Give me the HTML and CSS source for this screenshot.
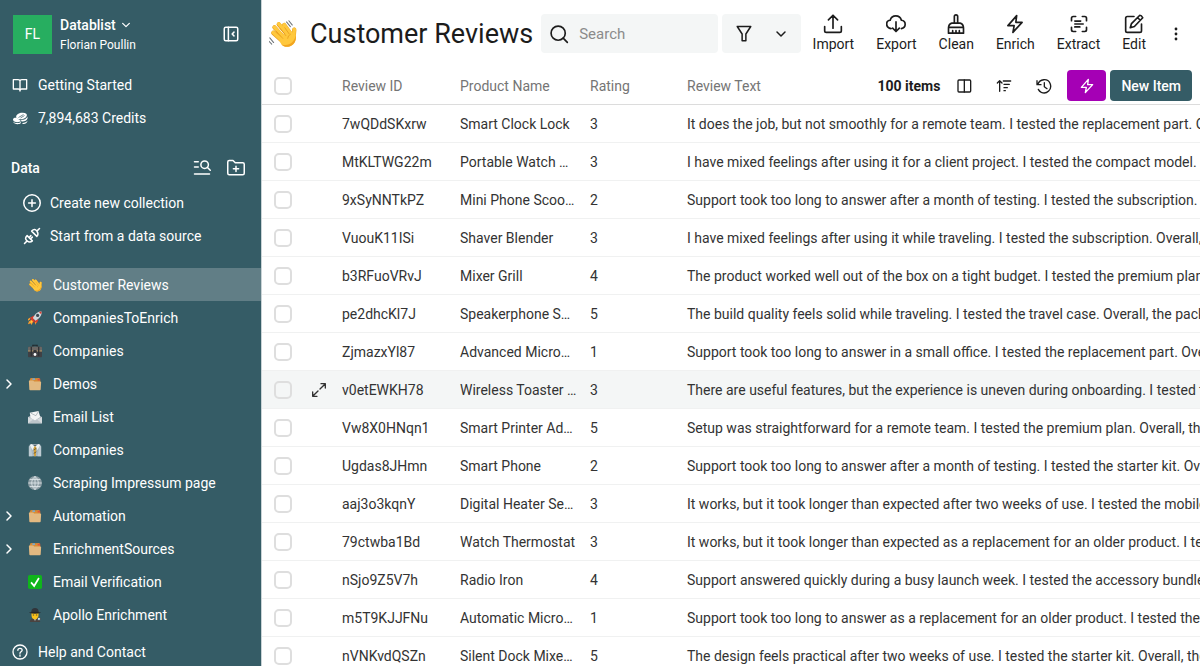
FILE: index.html
```html
<!DOCTYPE html>
<html lang="en">
  <head>
    <meta charset="UTF-8" />
    <meta name="viewport" content="width=device-width, initial-scale=1.0" />
    <title>Customer Reviews - Datablist</title>
    <link rel="stylesheet" href="styles.css">
  </head>
  <body>
    <!-- shared icons -->
    <svg class="sprite" aria-hidden="true">
      <symbol id="chevron-down" viewBox="0 0 24 24"><path d="M4 8l8 8 8-8" /></symbol>
      <symbol id="chevron-right" viewBox="0 0 24 24"><path d="M8 4l8 8-8 8" /></symbol>
      <symbol id="bolt" viewBox="0 0 24 24"><path d="M14 2L3.500 14H11l-1.500 8L20.500 10H13z" /></symbol>
      <symbol id="wave" viewBox="0 0 36 36">
        <g fill="none" stroke-linecap="round" stroke-linejoin="round">
          <path d="M5.500 16.500L17 27M7 9.500L20 24M12.500 5.500L25 20M19.500 6.500L28 18M32.500 12.500L31.500 24" stroke="#e59a1c" stroke-width="5.500" />
          <path d="M5.500 16L17 26.500M7 9L20 23.500M12.500 5L25 19.500M19.500 6L28 17.500M32.500 12L31.500 24" stroke="#ffc83d" stroke-width="4.500" />
        </g>
        <path d="M12 24l13-10 4 4 5.500 1c.500 7-1 11-5 13.500-5 3-10 2.500-13.500-1z" fill="#ffc83d" />
        <path d="M34.500 19c.500 7-1 11-5 13.500-5 3-10 2.500-13.500-1 6 1.500 10 .500 13.500-2.500 3-3 4-6 5-10z" fill="#f2a521" />
        <path d="M9 14l9 10M14 10.500l8 10M20 9.500l6 8.500M28 18q-4 2-4 6" fill="none" stroke="#e59a1c" />
        <path d="M22.500 2.500l5 6M25.500 1l4.500 5.500M1 23l5 6M0 27.500l3.500 3.500" fill="none" stroke="#6d7378" stroke-width="1.300" stroke-linecap="round" />
      </symbol>
      <symbol id="folder" viewBox="0 0 16 16">
        <path d="M2 3.500L3 1l4 .500 6-.500 1 3v3H2z" fill="#d98c34" />
        <path d="M5 1.500h3v2H5z" fill="#7fa9c9" />
        <path d="M11 2h3v2h-3z" fill="#e0523c" />
        <path d="M1 4.500Q1 4 1.500 4H6l1 1h7q1 0 1 1l-.500 8q0 1-1 1h-11q-1 0-1-1z" fill="#e3b981" />
      </symbol>
    </svg>

    <div class="app">
      <aside class="sidebar">
        <div class="account">
          <div class="avatar">FL</div>
          <div class="account-info">
            <button type="button" class="workspace">
              Datablist
              <svg class="icon icon-xs"><use href="#chevron-down" /></svg>
            </button>
            <div class="user">Florian Poullin</div>
          </div>
          <button type="button" class="icon-button" aria-label="Collapse sidebar">
            <svg class="icon icon-lg" viewBox="0 0 24 24"><rect x="3" y="3" width="18" height="18" rx="2" /><path d="M8.500 3v18M16 9.500L13.500 12l2.500 2.500" /></svg>
          </button>
        </div>

        <nav class="links">
          <a href="#">
            <svg class="icon icon-md" viewBox="0 0 24 24"><path d="M12 6.500C12 5 10.500 4 9 4H2v14h7.500c1.500 0 2.500 1 2.500 3 0-2 1-3 2.500-3H22V4h-7c-1.500 0-3 1-3 2.500zM12 6.500V20" /></svg>
            Getting Started
          </a>
          <a href="#">
            <svg class="icon-solid icon-md" viewBox="0 0 16 16">
              <path d="M1 9.500c0-1.500 2-2 4-1.500l4 3c-1 1.500-8 2-8-1.500z" />
              <path d="M1 11.500c2 2 6 2 8 .500v1c-2 2-7 1.500-8-1.500z" />
              <ellipse cx="9.500" cy="6" rx="5.500" ry="3.200" transform="rotate(-12 9.500 6)" />
              <path d="M9 10c3 0 5.500-1 6.500-3.500v2C15 10.500 12 12 9.500 11.500z" />
              <path d="M10.500 13c2 0 4.500-1 5-2.500 0 2-2 4-5 3.500z" />
              <path d="M6.500 7.500l5-3M8.500 8l4-2.500" fill="none" stroke="#355c66" stroke-width=".7" />
            </svg>
            7,894,683 Credits
          </a>
        </nav>

        <div class="section-head">
          <h2>Data</h2>
          <button type="button" class="icon-button" aria-label="Search collections">
            <svg class="icon icon-lg" viewBox="0 0 24 24"><circle cx="15.500" cy="7.500" r="5" /><path d="M19 11l4 4M2 3.500h5M2 10.500h5M2 20h20" /></svg>
          </button>
          <button type="button" class="icon-button" aria-label="New folder">
            <svg class="icon icon-lg" viewBox="0 0 24 24"><path d="M1 19V4q0-2 2-2h5l3 3h10q2 0 2 2v12q0 2-2 2H3q-2 0-2-2zM12 9.500v7M8.500 13h7" /></svg>
          </button>
        </div>

        <nav class="actions">
          <a href="#">
            <svg class="icon icon-lg" viewBox="0 0 24 24"><circle cx="12" cy="12" r="11" /><path d="M12 7.500v9M7.500 12h9" /></svg>
            Create new collection
          </a>
          <a href="#">
            <svg class="icon icon-lg" viewBox="0 0 24 24"><path d="M2 22l3.500-3.500M18.500 5.500L22 2M5.500 11.500l7 7M11.500 5.500l7 7M5.500 11.500c-3 3-2.500 5 0 7s4 2.500 7 0M11.500 5.500c3-3 5-2.500 7 0s2.500 4 0 7M8 14l2.500-2.500M10 16l2.500-2.500" /></svg>
            Start from a data source
          </a>
        </nav>

        <nav class="collections">
          <a href="#" class="active">
            <svg class="emoji"><use href="#wave" /></svg>
            Customer Reviews
          </a>
          <a href="#">
            <svg class="emoji" viewBox="0 0 16 16">
              <path d="M3 7l4-2 2 4-6 1zM9 9l3 1-2 4-3-1z" fill="#d93a2b" />
              <path d="M15.500.500c-4 0-7 2-10 7.500l3 3c5-3 7.500-6 7-10.500z" fill="#cdd5d9" />
              <path d="M15.500.500l-3 .600 2.500 2.500z" fill="#d93a2b" />
              <circle cx="11" cy="5" r="1.800" fill="#3b4a54" />
              <path d="M5 8l3 3-2 2-3-2z" fill="#d93a2b" />
              <path d="M4 10l2 2-2 4-1-2-3 1 1-3z" fill="#ff9e2c" />
              <path d="M0 9l3-2-1 3-2 1zM8 13l2-1-2 4z" fill="#ff9e2c" />
              <path d="M4 11l1 1-2 2z" fill="#ffe14d" />
            </svg>
            CompaniesToEnrich
          </a>
          <a href="#">
            <svg class="emoji" viewBox="0 0 16 16">
              <path d="M5.500 3V1.500h5V3" fill="none" stroke="#20262a" stroke-width="1.200" />
              <rect y="3" width="16" height="12" rx="1" fill="#3f4044" />
              <path d="M0 4q0-1 1-1h14q1 0 1 1v4H0z" fill="#6b6764" />
              <path d="M0 7.500h6v1H0zM10 7.500h6v1h-6z" fill="#b99b66" />
              <path d="M3 3h1.500v11H3zM11.500 3H13v11h-1.500z" fill="#2f3033" />
              <path d="M6.500 7h3v2h-3z" fill="#303033" />
              <circle cx="8" cy="12" r="1.600" fill="#fff" />
            </svg>
            Companies
          </a>
          <a href="#">
            <svg class="icon caret"><use href="#chevron-right" /></svg>
            <svg class="emoji"><use href="#folder" /></svg>
            Demos
          </a>
          <a href="#">
            <svg class="emoji" viewBox="0 0 16 16">
              <path d="M0 8l8-4 8 4v7H0z" fill="#aab4ba" />
              <path d="M2 3l10-2 2 7-6 4-5-3z" fill="#f3f5f5" />
              <path d="M3 3.500l6 3 3-5" fill="none" stroke="#9ba5ab" stroke-width=".8" />
              <path d="M0 8l8 4 8-4v7H0z" fill="#d5dadd" />
              <path d="M0 15l5.500-4L8 12l2.500-1 5.500 4z" fill="#bcc5ca" />
            </svg>
            Email List
          </a>
          <a href="#">
            <svg class="emoji" viewBox="0 0 16 16">
              <path d="M1 3l4-2h6l4 2v12H1z" fill="#a9b8c1" />
              <path d="M3 3l2 12H1V4zM13 3l-2 12h4V4z" fill="#bdcad1" />
              <path d="M5 2h6l-3 4z" fill="#4f6470" />
              <path d="M4 1l4 3-3 4-3-6zM12 1L8 4l3 4 3-6z" fill="#eef2f3" />
              <path d="M7 4h2l.500 2L9 15H7l-.500-9z" fill="#d3a139" />
              <path d="M6.500 8l3-2M6.500 12l3-2" stroke="#6b5830" />
            </svg>
            Companies
          </a>
          <a href="#">
            <svg class="emoji" viewBox="0 0 16 16">
              <circle cx="8" cy="8" r="8" fill="#8b9ba2" />
              <path d="M8 .500v15M.500 8h15M2 4h12M2 12h12M8 .500C3 4 3 12 8 15.500M8 .500c5 3.500 5 11.500 0 15" fill="none" stroke="#dde5e8" />
            </svg>
            Scraping Impressum page
          </a>
          <a href="#">
            <svg class="icon caret"><use href="#chevron-right" /></svg>
            <svg class="emoji"><use href="#folder" /></svg>
            Automation
          </a>
          <a href="#">
            <svg class="icon caret"><use href="#chevron-right" /></svg>
            <svg class="emoji"><use href="#folder" /></svg>
            EnrichmentSources
          </a>
          <a href="#">
            <svg class="emoji" viewBox="0 0 16 16">
              <rect width="16" height="16" rx="2" fill="#0fb51b" />
              <path d="M3.500 8.500L7 12.500l5.500-9" fill="none" stroke="#fff" stroke-width="2" />
            </svg>
            Email Verification
          </a>
          <a href="#">
            <svg class="emoji" viewBox="0 0 16 16">
              <path d="M2 16q0-4 6-4.500 6 .500 6 4.500z" fill="#4a4340" />
              <path d="M7 12h2l-1 3z" fill="#eee" />
              <path d="M4 5h8v3q0 5-4 5T4 8z" fill="#fcc21b" />
              <path d="M5.500 8h1.500M9 8h1.500" stroke="#44392c" />
              <path d="M4 3Q4.500 0 8 0T12 3l.500 2h-9z" fill="#31343a" />
              <path d="M1 5.500Q8 3 15 5.500 8 7.500 1 5.500z" fill="#24262b" />
              <circle cx="12.500" cy="12.500" r="1.800" fill="#c5dbe5" stroke="#222" stroke-width=".6" />
            </svg>
            Apollo Enrichment
          </a>
        </nav>

        <nav class="links help">
          <a href="#">
            <svg class="icon icon-md" viewBox="0 0 24 24"><circle cx="12" cy="12" r="10.500" /><path d="M8.800 9.500c0-4 6.400-4 6.400-.300 0 2.300-3.200 2.600-3.200 4.800M12 16.500v1.800" /></svg>
            Help and Contact
          </a>
        </nav>
      </aside>

      <main class="content">
        <header class="topbar">
          <svg class="title-emoji"><use href="#wave" /></svg>
          <h1>Customer Reviews</h1>
          <label class="search">
            <svg class="icon" viewBox="0 0 24 24"><circle cx="11" cy="11" r="8.500" /><path d="M17 17l5 5" /></svg>
            <input type="text" placeholder="Search" aria-label="Search" />
          </label>
          <button type="button" class="filter" aria-label="Filter">
            <svg class="icon icon-lg" viewBox="0 0 24 24"><path d="M3 2h18l-6.500 10v9h-5v-9z" /></svg>
            <svg class="icon icon-sm"><use href="#chevron-down" /></svg>
          </button>
          <div class="tools">
            <button type="button">
              <svg class="icon" viewBox="0 0 24 24"><path d="M2 15v5q0 2 2 2h16q2 0 2-2v-5M12 17V2M6.500 7L12 1.500 17.500 7" /></svg>
              Import
            </button>
            <button type="button">
              <svg class="icon" viewBox="0 0 24 24"><path d="M6 17.500C-1 16-.500 8 5 7.500c2-7 11.500-7 13.500 0 6 .500 6 9 0 10M12 9.500V20.500M8 17l4 4 4-4" /></svg>
              Export
            </button>
            <button type="button">
              <svg class="icon" viewBox="0 0 24 24"><path d="M10 11V3q0-2 2-2t2 2v8M10 11H7q-4 1-4 6v6h18v-6q0-5-4-6H7M3 16h18M8 23v-3M12 23v-3M16 23v-3" /></svg>
              Clean
            </button>
            <button type="button">
              <svg class="icon"><use href="#bolt" /></svg>
              Enrich
            </button>
            <button type="button">
              <svg class="icon" viewBox="0 0 24 24"><path d="M3 8V5q0-2 2-2h3M16 3h3q2 0 2 2v3M21 16v3q0 2-2 2h-3M8 21H5q-2 0-2-2v-3M7 8.500h7M7 12h10M7 15.500h6" /></svg>
              Extract
            </button>
            <button type="button">
              <svg class="icon" viewBox="0 0 24 24"><path d="M12 3H4Q2 3 2 5v15q0 2 2 2h15q2 0 2-2v-8M19 1.500q2 0 3.500 3L12.500 15l-5 1.500 1.500-5zM16.500 4.500l3 3" /></svg>
              Edit
            </button>
          </div>
          <button type="button" class="icon-button more" aria-label="More">
            <svg class="icon-solid icon-md" viewBox="0 0 16 16"><circle cx="8" cy="3" r="1.400" /><circle cx="8" cy="8" r="1.400" /><circle cx="8" cy="13" r="1.400" /></svg>
          </button>
        </header>

        <table>
          <colgroup>
            <col class="col-check" />
            <col class="col-open" />
            <col class="col-id" />
            <col class="col-name" />
            <col class="col-rating" />
            <col />
          </colgroup>
          <thead>
            <tr>
              <th class="check"><input type="checkbox" aria-label="Select all" /></th>
              <th></th>
              <th>Review ID</th>
              <th>Product Name</th>
              <th>Rating</th>
              <th>
                <div class="last-head">
                  <span>Review Text</span>
                  <strong>100 items</strong>
                  <button type="button" class="icon-button" aria-label="Columns">
                    <svg class="icon icon-md" viewBox="0 0 24 24"><rect x="3" y="3" width="19" height="18" rx="1.500" /><path d="M12.500 3v18" /></svg>
                  </button>
                  <button type="button" class="icon-button" aria-label="Sort">
                    <svg class="icon icon-md" viewBox="0 0 24 24"><path d="M5.500 20V4M2 7.500L5.500 4 9 7.500M11 4.500h11M12 9.500h8M12 14.500h5M12 19h2" /></svg>
                  </button>
                  <button type="button" class="icon-button" aria-label="History">
                    <svg class="icon icon-md" viewBox="0 0 24 24"><path d="M1.500 4v6h6M2.500 10c3-9 15-10 18.500-2 4 9-5 17-13 13.500-2-1-3.500-2.500-4.500-4.500M12.500 7v6l4 3" /></svg>
                  </button>
                  <div class="head-buttons">
                    <button type="button" class="btn btn-run" aria-label="Run">
                      <svg class="icon icon-md"><use href="#bolt" /></svg>
                    </button>
                    <button type="button" class="btn btn-new">New Item</button>
                  </div>
                </div>
              </th>
            </tr>
          </thead>
          <tbody>
            <tr>
              <td class="check"><input type="checkbox" aria-label="Select row" /></td>
              <td></td>
              <td>7wQDdSKxrw</td>
              <td class="name">Smart Clock Lock</td>
              <td>3</td>
              <td>It does the job, but not smoothly for a remote team. I tested the replacement part. Overall, the setup</td>
            </tr>
            <tr>
              <td class="check"><input type="checkbox" aria-label="Select row" /></td>
              <td></td>
              <td>MtKLTWG22m</td>
              <td class="name">Portable Watch Monitor</td>
              <td>3</td>
              <td>I have mixed feelings after using it for a client project. I tested the compact model. Overall, the setup</td>
            </tr>
            <tr>
              <td class="check"><input type="checkbox" aria-label="Select row" /></td>
              <td></td>
              <td>9xSyNNTkPZ</td>
              <td class="name">Mini Phone Scooter</td>
              <td>2</td>
              <td>Support took too long to answer after a month of testing. I tested the subscription. Overall, the setup</td>
            </tr>
            <tr>
              <td class="check"><input type="checkbox" aria-label="Select row" /></td>
              <td></td>
              <td>VuouK11ISi</td>
              <td class="name">Shaver Blender</td>
              <td>3</td>
              <td>I have mixed feelings after using it while traveling. I tested the subscription. Overall, the setup</td>
            </tr>
            <tr>
              <td class="check"><input type="checkbox" aria-label="Select row" /></td>
              <td></td>
              <td>b3RFuoVRvJ</td>
              <td class="name">Mixer Grill</td>
              <td>4</td>
              <td>The product worked well out of the box on a tight budget. I tested the premium plan. Overall, the setup</td>
            </tr>
            <tr>
              <td class="check"><input type="checkbox" aria-label="Select row" /></td>
              <td></td>
              <td>pe2dhcKl7J</td>
              <td class="name">Speakerphone Smart</td>
              <td>5</td>
              <td>The build quality feels solid while traveling. I tested the travel case. Overall, the packaging is good</td>
            </tr>
            <tr>
              <td class="check"><input type="checkbox" aria-label="Select row" /></td>
              <td></td>
              <td>ZjmazxYl87</td>
              <td class="name">Advanced Microwave</td>
              <td>1</td>
              <td>Support took too long to answer in a small office. I tested the replacement part. Overall, the setup</td>
            </tr>
            <tr class="hovered">
              <td class="check"><input type="checkbox" aria-label="Select row" /></td>
              <td class="open">
                <button type="button" class="icon-button" aria-label="Open item">
                  <svg class="icon icon-md" viewBox="0 0 24 24"><path d="M15 2.500h6.500V9M21.500 2.500L13.500 10.500M2.500 15v6.500H9M2.500 21.500l8-8" /></svg>
                </button>
              </td>
              <td>v0etEWKH78</td>
              <td class="name">Wireless Toaster Oven</td>
              <td>3</td>
              <td>There are useful features, but the experience is uneven during onboarding. I tested the premium plan</td>
            </tr>
            <tr>
              <td class="check"><input type="checkbox" aria-label="Select row" /></td>
              <td></td>
              <td>Vw8X0HNqn1</td>
              <td class="name">Smart Printer Adapter</td>
              <td>5</td>
              <td>Setup was straightforward for a remote team. I tested the premium plan. Overall, the results are good</td>
            </tr>
            <tr>
              <td class="check"><input type="checkbox" aria-label="Select row" /></td>
              <td></td>
              <td>Ugdas8JHmn</td>
              <td class="name">Smart Phone</td>
              <td>2</td>
              <td>Support took too long to answer after a month of testing. I tested the starter kit. Overall, the setup</td>
            </tr>
            <tr>
              <td class="check"><input type="checkbox" aria-label="Select row" /></td>
              <td></td>
              <td>aaj3o3kqnY</td>
              <td class="name">Digital Heater Sensor</td>
              <td>3</td>
              <td>It works, but it took longer than expected after two weeks of use. I tested the mobile app. Overall</td>
            </tr>
            <tr>
              <td class="check"><input type="checkbox" aria-label="Select row" /></td>
              <td></td>
              <td>79ctwba1Bd</td>
              <td class="name">Watch Thermostat</td>
              <td>3</td>
              <td>It works, but it took longer than expected as a replacement for an older product. I tested the bundle</td>
            </tr>
            <tr>
              <td class="check"><input type="checkbox" aria-label="Select row" /></td>
              <td></td>
              <td>nSjo9Z5V7h</td>
              <td class="name">Radio Iron</td>
              <td>4</td>
              <td>Support answered quickly during a busy launch week. I tested the accessory bundle. Overall, the setup</td>
            </tr>
            <tr>
              <td class="check"><input type="checkbox" aria-label="Select row" /></td>
              <td></td>
              <td>m5T9KJJFNu</td>
              <td class="name">Automatic Microwave</td>
              <td>1</td>
              <td>Support took too long to answer as a replacement for an older product. I tested the replacement part</td>
            </tr>
            <tr>
              <td class="check"><input type="checkbox" aria-label="Select row" /></td>
              <td></td>
              <td>nVNKvdQSZn</td>
              <td class="name">Silent Dock Mixed Set</td>
              <td>5</td>
              <td>The design feels practical after two weeks of use. I tested the starter kit. Overall, the app is good</td>
            </tr>
          </tbody>
        </table>
      </main>
    </div>
  </body>
</html>
```
FILE: styles.css
```css
* {
  box-sizing: border-box;
}
body {
  margin: 0;
  font-family: Roboto, "Liberation Sans", sans-serif;
  font-size: 14px;
  line-height: 20px;
  color: #333;
}
h1,
h2 {
  margin: 0;
}
a {
  color: inherit;
  text-decoration: none;
}
button,
input {
  font: inherit;
  color: inherit;
}
button {
  padding: 0;
  border: none;
  background: none;
  cursor: pointer;
}

/* icons */
.sprite {
  position: absolute;
  width: 0;
  height: 0;
}
.icon {
  width: 20px;
  height: 20px;
  flex: none;
  fill: none;
  stroke: currentColor;
  stroke-width: 2;
  stroke-linecap: round;
  stroke-linejoin: round;
}
.icon-solid {
  flex: none;
  fill: currentColor;
}
.icon-xs {
  width: 10px;
  height: 10px;
  stroke-width: 3;
}
.icon-sm {
  width: 12px;
  height: 12px;
  stroke-width: 3;
}
.icon-md {
  width: 16px;
  height: 16px;
}
.icon-lg {
  width: 18px;
  height: 18px;
}
.emoji {
  width: 14px;
  height: 14px;
  flex: none;
}
.icon-button {
  display: flex;
  align-items: center;
  justify-content: center;
}

/* layout */
.app {
  display: flex;
  height: 100vh;
  overflow: hidden;
}
.sidebar {
  display: flex;
  flex-direction: column;
  flex: none;
  width: 262px;
  border-right: 1px solid #c9d3d6;
  background-color: #355c66;
  color: #fff;
}
.content {
  flex: 1;
  min-width: 0;
  background-color: #fff;
}

/* sidebar */
.account {
  display: flex;
  align-items: center;
  gap: 8px;
  height: 68px;
  padding: 0 21px 0 13px;
}
.avatar {
  width: 39px;
  height: 39px;
  line-height: 39px;
  background-color: #27ae60;
  text-align: center;
}
.account-info {
  flex: 1;
  padding-top: 2px;
}
.workspace {
  display: flex;
  align-items: center;
  gap: 5px;
  font-weight: 500;
}
.user {
  font-size: 12px;
}
.links a {
  display: flex;
  align-items: center;
  gap: 10px;
  height: 33px;
  padding-left: 12px;
}
.section-head {
  display: flex;
  align-items: center;
  gap: 16px;
  height: 34px;
  margin-top: 17px;
  padding: 0 16px 0 11px;
}
.section-head h2 {
  flex: 1;
  font-size: 14px;
  font-weight: 500;
}
.actions {
  margin-top: 1px;
}
.actions a {
  display: flex;
  align-items: center;
  gap: 9px;
  height: 33px;
  padding-left: 23px;
}
.collections {
  margin-top: 16px;
}
.collections a {
  display: flex;
  align-items: center;
  gap: 11px;
  height: 33px;
  padding-left: 28px;
}
.collections a.active {
  background-color: #617e86;
}
.caret {
  width: 12px;
  height: 12px;
  margin-left: -25px;
  margin-right: 2px;
  stroke-width: 3;
}
.help {
  margin-top: auto;
}
.links.help a {
  height: 28px;
}

/* top bar */
.topbar {
  display: flex;
  align-items: center;
  height: 67px;
  padding: 0 16px 0 7px;
  color: #1c1c1c;
}
.title-emoji {
  width: 28px;
  height: 28px;
  flex: none;
  margin-right: 13px;
}
h1 {
  flex: none;
  font-size: 27px;
  font-weight: 400;
  line-height: 36px;
}
.search {
  display: flex;
  align-items: center;
  flex: 1;
  gap: 10px;
  height: 39px;
  margin-left: 8px;
  padding: 0 8px;
  border-radius: 4px;
  background-color: #f4f6f6;
}
.search input {
  width: 100%;
  min-width: 0;
  padding: 0;
  border: none;
  outline: none;
  background: none;
  font-size: 15px;
}
.search input::placeholder {
  color: #8b8b8b;
}
.filter {
  display: flex;
  align-items: center;
  justify-content: space-between;
  width: 79px;
  height: 39px;
  margin: 0 12px 0 4px;
  padding: 0 14px 0 13px;
  border-radius: 4px;
  background-color: #f4f6f6;
}
.tools {
  display: flex;
  gap: 22px;
}
.tools button {
  display: flex;
  flex-direction: column;
  align-items: center;
}
.more {
  margin-left: 22px;
}

/* table */
table {
  width: 100%;
  table-layout: fixed;
  border-collapse: separate;
  border-spacing: 0;
}
.col-check {
  width: 42px;
}
.col-open {
  width: 30px;
}
.col-id {
  width: 118px;
}
.col-name {
  width: 130px;
}
.col-rating {
  width: 97px;
}
th,
td {
  height: 38px;
  padding: 0 8px;
  border-bottom: 1px solid #f0f1f1;
  text-align: left;
  white-space: nowrap;
  overflow: hidden;
  text-overflow: ellipsis;
}
th {
  border-bottom-color: #dcdcdc;
  color: #757575;
  font-weight: 400;
}
.name {
  padding-right: 4px;
}
th:last-child,
td:last-child {
  padding-right: 0;
  text-overflow: clip;
}
.check {
  padding: 0 0 0 12px;
}
.check input {
  display: block;
  appearance: none;
  width: 18px;
  height: 18px;
  margin: 0;
  border: 2px solid #dedede;
  border-radius: 5px;
  background-color: #fff;
}
.open {
  padding: 0;
}
.open .icon-button {
  width: 100%;
}
.hovered td {
  background-color: #f4f6f6;
}
.hovered .check input {
  background-color: transparent;
}
.last-head {
  display: flex;
  align-items: center;
  gap: 24px;
  padding-right: 8px;
  color: #1c1c1c;
}
.last-head span {
  flex: 1;
  color: #757575;
}
.last-head strong {
  margin-right: -8px;
  font-weight: 700;
}
.head-buttons {
  display: flex;
  gap: 4px;
  margin-left: -9px;
}
.btn {
  display: flex;
  align-items: center;
  justify-content: center;
  height: 31px;
  border-radius: 4px;
  color: #fff;
}
.btn-run {
  width: 39px;
  background-color: #a500b5;
}
.btn-new {
  padding: 0 11px;
  background-color: #355c66;
  font-weight: 500;
}
```
